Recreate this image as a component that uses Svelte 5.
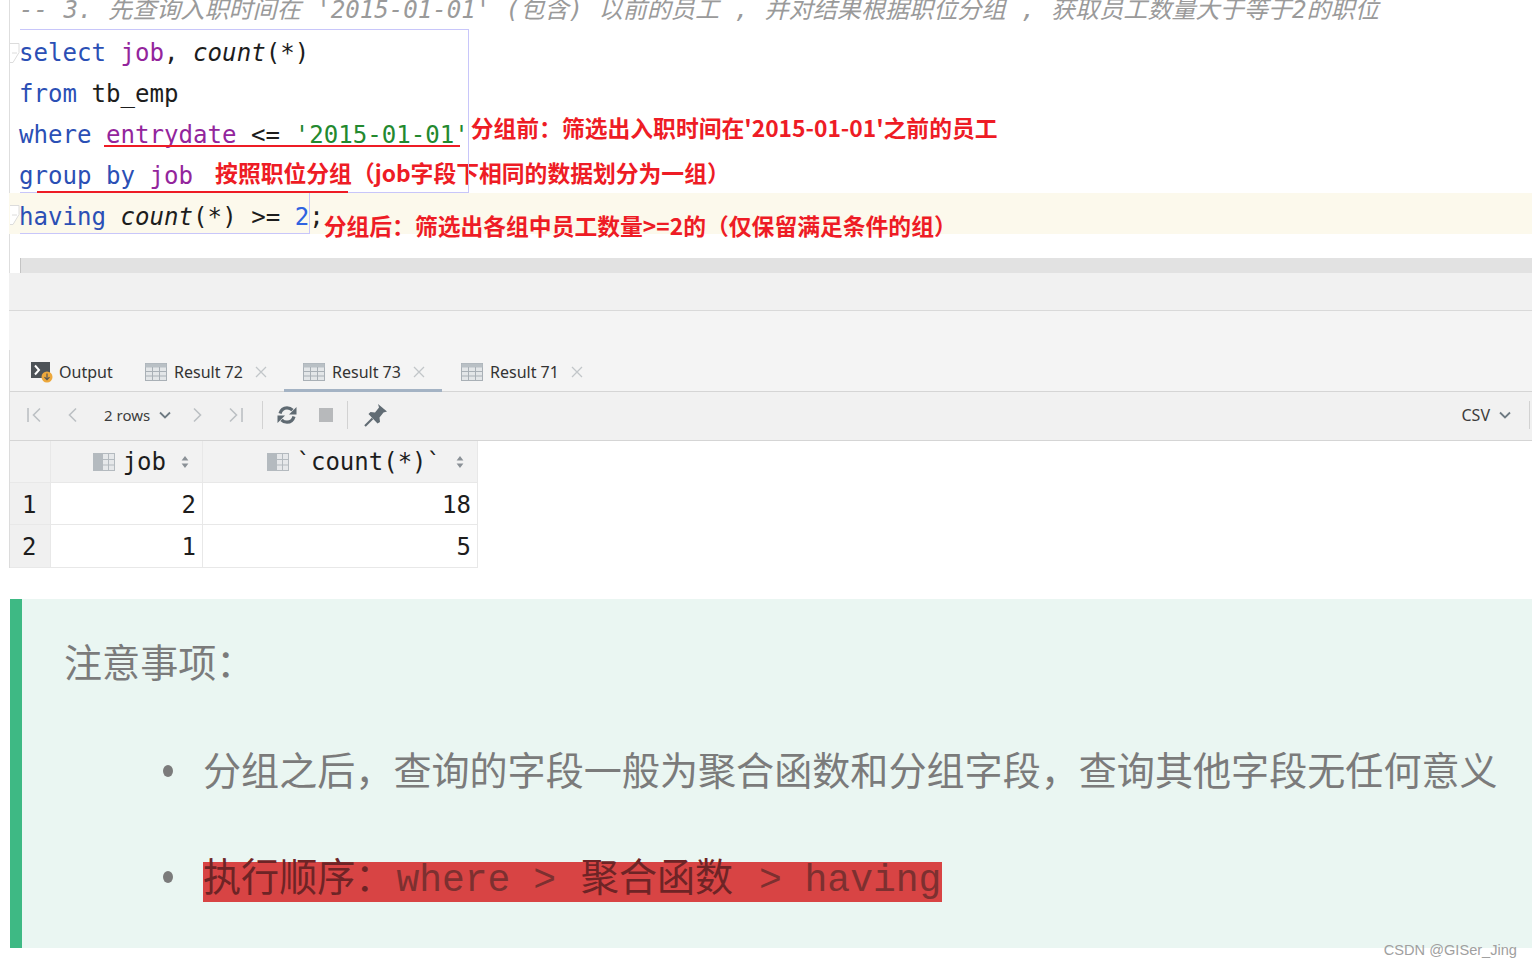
<script lang="ts">
  const tabs = [
    { label: "Result 72", active: false },
    { label: "Result 73", active: true },
    { label: "Result 71", active: false },
  ];
  const rows = [
    { id: 1, job: 2, count: 18 },
    { id: 2, job: 1, count: 5 },
  ];
</script>

{#snippet gridIcon()}
  <svg class="grid-icon" width="22" height="18" viewBox="0 0 22 18">
    <rect x="0.5" y="0.5" width="21" height="17" fill="#e3e6e8" stroke="#a9b0b6" />
    <rect x="0.5" y="0.5" width="21" height="4" fill="#b9c0c5" />
    <path d="M7.5 4v14M14.5 4v14M0 8.500h22M0 13h22" stroke="#a9b0b6" fill="none" />
  </svg>
{/snippet}

{#snippet columnIcon()}
  <svg class="col-icon" width="22" height="18" viewBox="0 0 22 18">
    <rect x="0" y="0" width="9" height="18" fill="#b4babf" />
    <rect x="9.5" y="0.5" width="12" height="17" fill="#e6e8ea" stroke="#b4babf" />
    <path d="M15.5 0v18M9 6.500h13M9 12h13" stroke="#b4babf" fill="none" />
  </svg>
{/snippet}

{#snippet sortIcon()}
  <svg class="sort" width="8" height="14" viewBox="0 0 8 14">
    <path d="M4 1l3.400 4.400H.6zM4 13L.6 8.600h6.800z" fill="#8b9197" />
  </svg>
{/snippet}

{#snippet chevron()}
  <svg class="chevron" width="12" height="8" viewBox="0 0 12 8">
    <path d="M1 1.500l5 5 5-5" fill="none" stroke="#6e7a82" stroke-width="1.8" />
  </svg>
{/snippet}

{#snippet fold(cls)}
  <svg class="fold {cls}" width="10" height="20" viewBox="0 0 10 20">
    <path d="M0 1h9v9l-6 9H0z" fill="#fff" />
    <path d="M0 .5h9M9 .5v9L3 19.500H0M2 10h5" fill="none" stroke="#dcdcdc" />
  </svg>
{/snippet}

<div class="page">
  <section class="editor">
    <div class="gutter"></div>
    <div class="code">
      <div class="line comment">-- 3. 先查询入职时间在 '2015-01-01' (包含) 以前的员工 , 并对结果根据职位分组 , 获取员工数量大于等于2的职位</div>
      <div class="line">
        <span class="kw">select</span> <span class="field">job</span>, <em>count</em>(<em>*</em>)
      </div>
      <div class="line"><span class="kw">from</span> tb_emp</div>
      <div class="line">
        <span class="kw">where</span> <span class="field">entrydate</span> &lt;= <span class="str">'2015-01-01'</span><span class="note note-where">分组前：筛选出入职时间在'2015-01-01'之前的员工</span>
        <i class="mark mark-where"></i>
      </div>
      <div class="line">
        <span class="kw">group by</span> <span class="field">job</span><span class="note note-group">按照职位分组（job字段下相同的数据划分为一组）</span>
        <i class="mark mark-group"></i>
      </div>
      <div class="line current">
        <span class="kw">having</span> <em>count</em>(<em>*</em>) &gt;= <span class="num">2</span>;<span class="note note-having">分组后：筛选出各组中员工数量&gt;=2的（仅保留满足条件的组）</span>
      </div>
      <i class="sel sel-top"></i>
      <i class="sel sel-bottom"></i>
    </div>
    {@render fold("fold-a")}
    {@render fold("fold-b")}
    <div class="scrollbar"></div>
  </section>

  <div class="split split-a"></div>
  <div class="split split-b"></div>

  <section class="results">
    <div class="tabs">
      <div class="tab output">
        <svg width="22" height="22" viewBox="0 0 22 22">
          <rect x="0" y="1" width="19" height="16" fill="#4d5257" />
          <path d="M4 4.500l4 4.500-4 4.500" fill="none" stroke="#fff" stroke-width="2" />
          <circle cx="16" cy="16" r="5.500" fill="#eda83c" />
          <path d="M16 12.500v6M13.500 16.200l2.500 2.500 2.500-2.500" fill="none" stroke="#555" stroke-width="1.2" />
        </svg>
        Output
      </div>
      {#each tabs as tab}
        <div class="tab" class:active={tab.active}>
          {@render gridIcon()}
          {tab.label}
          <svg class="close" width="12" height="12" viewBox="0 0 12 12">
            <path d="M1 1l10 10M11 1L1 11" stroke="#c2c6c9" stroke-width="1.3" />
          </svg>
        </div>
      {/each}
    </div>

    <div class="toolbar">
      <svg class="tool first" width="16" height="16" viewBox="0 0 16 16">
        <path d="M2 1v14M14 1.500L7.500 8l6.500 6.500" fill="none" stroke="#bcc0c4" stroke-width="1.6" />
      </svg>
      <svg class="tool prev" width="10" height="16" viewBox="0 0 10 16">
        <path d="M9 1.500L2.500 8 9 14.500" fill="none" stroke="#bcc0c4" stroke-width="1.6" />
      </svg>
      <span class="rows">2 rows</span>
      {@render chevron()}
      <svg class="tool next" width="10" height="16" viewBox="0 0 10 16">
        <path d="M1 1.500L7.500 8 1 14.500" fill="none" stroke="#bcc0c4" stroke-width="1.6" />
      </svg>
      <svg class="tool last" width="16" height="16" viewBox="0 0 16 16">
        <path d="M14 1v14M2 1.500L8.500 8 2 14.500" fill="none" stroke="#bcc0c4" stroke-width="1.6" />
      </svg>
      <span class="vr vr-a"></span>
      <svg class="tool" width="22" height="20" viewBox="0 0 22 20">
        <path d="M4 8.500C5 5 7.500 2.800 11 2.800c2.200 0 4 .8 5.500 2.400M18 11.500c-1 3.500-3.500 5.700-7 5.700-2.200 0-4-.8-5.500-2.400" fill="none" stroke="#5f6a72" stroke-width="3.200" />
        <path d="M20.500 2v7.500h-7.500zM1.500 18v-7.500h7.500z" fill="#5f6a72" />
      </svg>
      <span class="stop"></span>
      <span class="vr vr-b"></span>
      <svg class="tool pin" width="24" height="24" viewBox="0 0 24 24">
        <path d="M14 1l9 7.500-3.500 1-4 5 .5 4.500-2.500 1.500-9-9.500 2-2 4.500.5 4-5z" fill="#616c74" />
        <path d="M8.500 15.500L1 23" stroke="#616c74" stroke-width="2.200" />
      </svg>
      <span class="csv">CSV</span>
      {@render chevron()}
      <span class="vr vr-c"></span>
    </div>

    <div class="table">
      <div class="cell head corner"></div>
      <div class="cell head">{@render columnIcon()}<span>job</span>{@render sortIcon()}</div>
      <div class="cell head">{@render columnIcon()}<span>`count(*)`</span>{@render sortIcon()}</div>
      {#each rows as row}
        <div class="cell rownum">{row.id}</div>
        <div class="cell value">{row.job}</div>
        <div class="cell value">{row.count}</div>
      {/each}
    </div>
  </section>

  <section class="callout">
    <p class="title">注意事项：</p>
    <ul>
      <li>分组之后，查询的字段一般为聚合函数和分组字段，查询其他字段无任何意义</li>
      <li><mark>执行顺序：<code class="code-a">{"where > "}</code>聚合函数<code class="code-b">{" > having"}</code></mark></li>
    </ul>
  </section>
  <footer class="watermark">CSDN @GISer_Jing</footer>
</div>

<style>
  :global(body) {
    margin: 0;
    background: #fff;
  }

  .page {
    height: 968px;
    overflow: hidden;
    font-family: "Noto Sans", "Noto Sans CJK SC", sans-serif;
  }

  .editor {
    position: relative;
    height: 273px;
    margin-left: 9px;
    overflow: hidden;
  }

  .gutter {
    position: absolute;
    left: 0;
    top: 0;
    bottom: 0;
    width: 10px;
    background: #fff;
    border-left: 1px solid #dedede;
  }

  .fold {
    position: absolute;
    left: 1px;
  }

  .fold-a { top: 43px; }
  .fold-b { top: 205px; }

  .code {
    position: relative;
    margin-top: -12px;
    padding-left: 10px;
    font-family: "DejaVu Sans Mono", "Noto Sans CJK SC", monospace;
    font-size: 24.1px;
    color: #1d1d1d;
  }

  .line {
    position: relative;
    height: 41px;
    line-height: 48px;
    white-space: pre;
  }

  .line em {
    font-style: italic;
  }

  .comment {
    line-height: 45px;
    word-spacing: 1px;
    color: #9a9a9a;
    font-style: italic;
  }

  .current {
    margin-left: -10px;
    padding-left: 10px;
    background: #fcf9ec;
  }

  .kw { color: #2b4fb5; }
  .field { color: #93259c; }
  .str { color: #23892f; }
  .num { color: #2f63e0; }

  .note {
    position: relative;
    font-family: "Noto Sans CJK SC", sans-serif;
    font-size: 22.8px;
    line-height: 1;
    font-weight: 700;
    color: #ee1c25;
  }

  .note-where { top: -6px; margin-left: 2px; }
  .note-group { margin-left: 22px; top: -2px; }
  .note-having { top: 10px; }

  .mark {
    position: absolute;
    z-index: 1;
    height: 2px;
    background: #ee1c25;
  }

  .mark-where { left: 85px; width: 356px; bottom: 5px; }
  .mark-group { left: 18px; width: 311px; bottom: 0; }

  .sel {
    position: absolute;
    border: 1px solid #c8c6fa;
    pointer-events: none;
  }

  .sel-top { left: 11px; top: 41px; width: 448px; height: 162px; border-left: 0; }
  .sel-bottom { left: 11px; top: 205px; width: 289px; height: 40px; border-left: 0; border-top: 0; }

  .scrollbar {
    position: absolute;
    left: 11px;
    right: 0;
    top: 258px;
    height: 15px;
    box-sizing: border-box;
    background: #e2e2e2;
    border-left: 1px solid #c4c4c4;
  }

  .split { margin-left: 9px; }
  .split-a { height: 37px; background: #f1f1f1; border-bottom: 1px solid #d9d9d9; }
  .split-b { height: 39px; background: #f4f4f4; }

  .results {
    margin-left: 9px;
    border-left: 1px solid #dcdcdc;
  }

  .tabs {
    display: flex;
    height: 41px;
    padding-left: 2px;
    background: #f4f4f4;
    border-bottom: 1px solid #d5d5d5;
    font-size: 16px;
    color: #333;
  }

  .tab {
    display: flex;
    align-items: center;
    gap: 7px;
    position: relative;
    width: 158px;
    padding: 2px 0 0 19px;
    box-sizing: border-box;
  }

  .output {
    width: 114px;
    gap: 6px;
  }

  .tab.active::after {
    content: "";
    position: absolute;
    left: 0;
    right: 0;
    bottom: -1px;
    height: 3px;
    background: #a4b3c4;
  }

  .close { margin-left: 5px; }

  .toolbar {
    display: flex;
    align-items: center;
    box-sizing: border-box;
    height: 49px;
    padding-bottom: 2px;
    background: #f1f1f1;
    border-bottom: 1px solid #d5d5d5;
    font-size: 15px;
    color: #3c3c3c;
  }

  .first { margin-left: 16px; }
  .prev { margin-left: 25px; }
  .rows { margin-left: 27px; margin-right: 9px; }
  .next { margin-left: 22px; }
  .last { margin-left: 25px; }

  .vr {
    width: 1px;
    height: 28px;
    background: #d2d2d2;
  }

  .vr-a { margin: 0 13px 0 18px; }
  .vr-b { margin: 0 16px 0 14px; }
  .vr-c { margin-left: 18px; margin-right: 2px; }

  .stop {
    width: 14px;
    height: 14px;
    margin-left: 21px;
    background: #b7b9bb;
  }

  .csv { margin-left: auto; margin-right: 9px; font-size: 16px; }

  .table {
    display: grid;
    grid-template-columns: 41px 152px 275px;
    grid-template-rows: 42px 42px 43px;
    width: 468px;
    font-family: "DejaVu Sans Mono", monospace;
    font-size: 24px;
    color: #1d1d1d;
  }

  .cell {
    display: flex;
    align-items: center;
    box-sizing: border-box;
    border-right: 1px solid #e8e8e8;
    border-bottom: 1px solid #e8e8e8;
  }

  .head {
    justify-content: flex-end;
    padding-right: 13px;
    background: #f2f2f2;
  }

  .head span { margin-left: 8px; margin-right: 15px; }

  .rownum {
    padding: 2px 0 0 12px;
    background: #f0f0f0;
  }

  .value {
    justify-content: flex-end;
    padding: 2px 6px 0 0;
  }

  .callout {
    box-sizing: border-box;
    height: 349px;
    margin: 31px 0 0 10px;
    padding-top: 36px;
    background: #eaf6f2;
    border-left: 12px solid #3eb984;
    font-family: "Noto Sans CJK SC", sans-serif;
    font-size: 38.1px;
    font-weight: 400;
    color: #7b7b7b;
  }

  .title {
    margin: 0 0 0 42px;
    line-height: 52px;
  }

  ul {
    list-style: none;
    margin: 54px 0 0;
    padding: 0 0 0 181px;
  }

  li {
    position: relative;
    height: 55px;
    line-height: 55px;
    margin-bottom: 51px;
    white-space: nowrap;
  }

  li::before {
    content: "";
    position: absolute;
    left: -40px;
    top: 24px;
    width: 10px;
    height: 12px;
    border-radius: 50%;
    background: #7b7b7b;
  }

  mark {
    background: linear-gradient(#d84444, #d84444) no-repeat 0 15px / 100% 40px;
    color: #6e2426;
    display: inline-block;
    width: 739px;
  }

  code {
    font-family: "Liberation Mono", monospace;
    font-size: 38px;
    font-weight: 400;
    white-space: pre;
    color: #7d3030;
  }

  .code-a { margin: 0 2px 0 3px; }
  .code-b { margin-left: 3px; }

  .watermark {
    margin: -7px 15px 0 0;
    position: relative;
    text-align: right;
    font-family: "Liberation Sans", sans-serif;
    font-size: 14.6px;
    line-height: 18px;
    color: #a0a0a0;
  }
</style>
